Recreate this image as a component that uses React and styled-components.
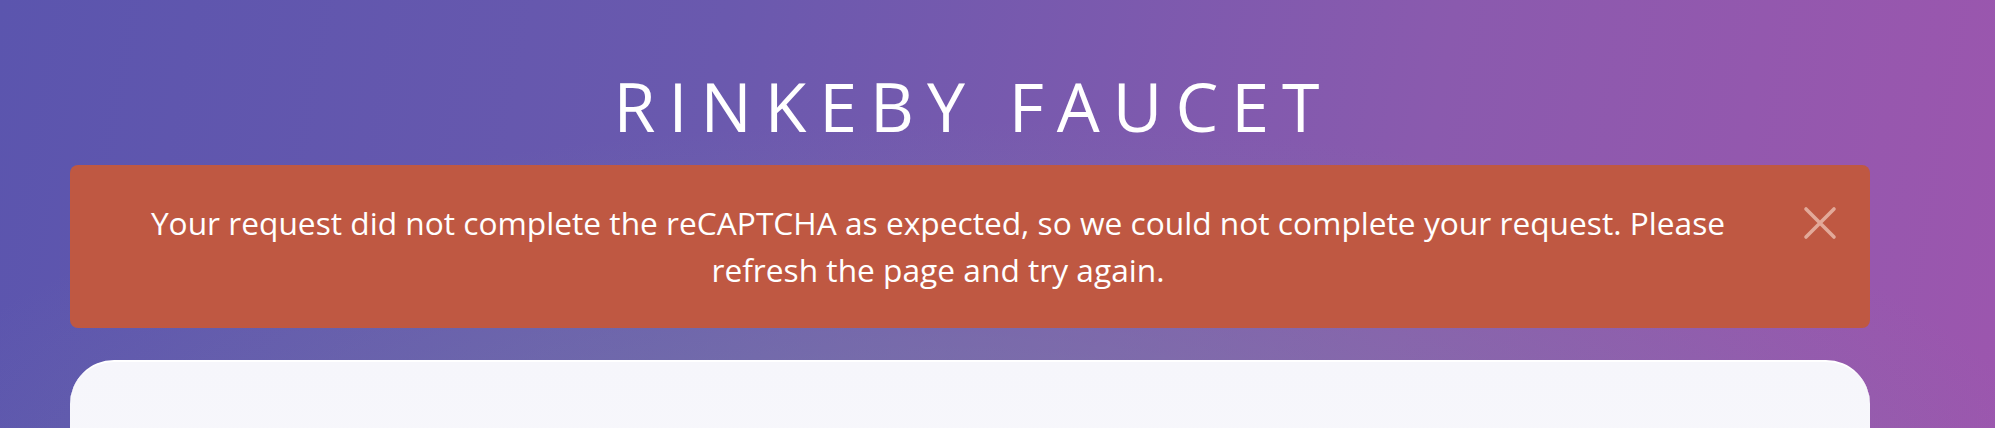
import React from "react";
import styled, { createGlobalStyle } from "styled-components";

const GlobalStyle = createGlobalStyle`
  html, body { margin: 0; padding: 0; }
  body { font-family: "Open Sans", "Noto Sans", sans-serif; overflow: hidden; }
`;

const Page = styled.div`
  min-height: 428px;
  width: 100%;
  background:
    radial-gradient(ellipse 55% 75% at 48% 100%, rgba(125, 140, 165, 0.55), rgba(125, 140, 165, 0) 100%),
    linear-gradient(100deg, #5b55ae 0%, #6a59ae 35%, #8a5aae 70%, #9c56ae 100%);
  padding-top: 1px;
  box-sizing: border-box;
`;

const Container = styled.div`
  width: 1800px;
  margin: 0 0 0 70px;
  display: flex;
  flex-direction: column;
`;

const Title = styled.h1`
  margin: 60px 0 0;
  padding-left: 6px;
  text-align: center;
  font-family: "Open Sans", sans-serif;
  font-weight: 400;
  font-size: 68px;
  line-height: 90px;
  letter-spacing: 13px;
  color: #ffffff;
`;

const Alert = styled.div`
  margin-top: 14px;
  position: relative;
  background: #bf5842;
  border-radius: 8px;
  padding: 34px 112px 35px 48px;
  color: #ffffff;
  font-family: "Open Sans", sans-serif;
  font-size: 31.7px;
  line-height: 47px;
  text-align: center;
`;

const Close = styled.button`
  position: absolute;
  top: 41px;
  right: 33px;
  width: 34px;
  height: 34px;
  padding: 0;
  border: 0;
  background: transparent;
  cursor: pointer;
  display: flex;
  align-items: center;
  justify-content: center;
`;

const Card = styled.div`
  margin-top: 32px;
  height: 120px;
  background: linear-gradient(180deg, #f6f6fb 0%, #f7f7fb 100%);
  border-top: 2px solid #ffffff;
  border-radius: 44px 44px 0 0;
`;

export default function App() {
  return (
    <>
      <GlobalStyle />
      <Page>
        <Container>
          <Title>RINKEBY FAUCET</Title>
          <Alert>
            Your request did not complete the reCAPTCHA as expected, so we could not complete your request. Please refresh the page and try again.
            <Close aria-label="Close">
              <svg width="34" height="34" viewBox="0 0 34 34">
                <path d="M3 3 L31 31 M31 3 L3 31" stroke="#e2a999" strokeWidth="3.6" strokeLinecap="round" />
              </svg>
            </Close>
          </Alert>
          <Card />
        </Container>
      </Page>
    </>
  );
}
